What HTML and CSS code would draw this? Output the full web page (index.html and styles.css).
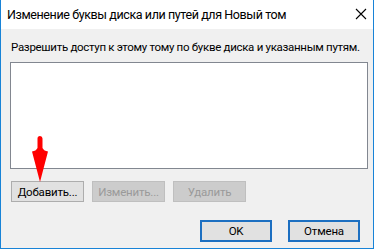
FILE: index.html
```html
<!DOCTYPE html>
<html lang="ru">
<head>
    <meta charset="UTF-8">
    <meta name="viewport" content="width=device-width, initial-scale=1.0">
    <title>Изменение буквы диска или путей для Новый том</title>
    <link rel="stylesheet" href="styles.css">
</head>
<body>

    <div class="window">
        <!-- Title bar -->
        <div class="titlebar">
            <span class="title">Изменение буквы диска или путей для Новый том</span>
            <svg class="close" width="12" height="12" viewBox="0 0 12 12">
                <path d="M1 1 L11 11 M11 1 L1 11" stroke="#000" stroke-width="1.1" fill="none" />
            </svg>
        </div>

        <!-- Dialog body -->
        <div class="content">
            <p class="caption">Разрешить доступ к этому тому по букве диска и указанным путям.</p>
            <div class="list"></div>

            <div class="actions">
                <button class="btn">Добавить...</button>
                <button class="btn" disabled>Изменить...</button>
                <button class="btn" disabled>Удалить</button>
            </div>

            <div class="footer">
                <button class="btn btn-default">OK</button>
                <button class="btn btn-default">Отмена</button>
            </div>
        </div>

        <!-- Red pointer over the "Add" button -->
        <svg class="pointer" width="18" height="46" viewBox="0 0 18 46">
            <path d="M6.5 2.5 A2.5 2.5 0 0 1 11.5 2.5 L11.5 12 Q13 15 17 15.5 L9 46 L1 15.5 Q5 15 6.5 12 Z" fill="#f00" />
        </svg>
    </div>

</body>
</html>
```

FILE: styles.css
```css
body {
    margin: 0;
    font-family: Roboto, "Liberation Sans", Arial, sans-serif;
    font-size: 12px;
    color: #000;
    background-color: #fff;
}

.window {
    position: relative;
    width: 374px;
    height: 249px;
    box-sizing: border-box;
    border: 1px solid #1883d7;
    border-top: none;
    background-color: #f0f0f0;
    overflow: hidden;
}

.titlebar {
    display: flex;
    align-items: center;
    justify-content: space-between;
    height: 29px;
    padding: 0 6px 1px 6px;
    box-sizing: border-box;
    background-color: #fff;
}

.title {
    font-size: 12.5px;
    letter-spacing: -0.4px;
    white-space: nowrap;
}

.close {
    display: block;
}

.content {
    padding: 10px 5px 0 9px;
}

.caption {
    margin: 0 0 7px 1px;
    font-size: 11.5px;
    line-height: 16px;
    letter-spacing: -0.3px;
    white-space: nowrap;
}

.list {
    height: 105px;
    border: 1px solid #828790;
    background-color: #fff;
}

.actions {
    display: flex;
    gap: 8px;
    margin: 12px 0 0 1px;
}

.footer {
    display: flex;
    justify-content: flex-end;
    gap: 16px;
    margin-top: 18px;
    padding-right: 8px;
}

.btn {
    width: 73px;
    height: 21px;
    padding: 0;
    font-family: inherit;
    font-size: 11.5px;
    letter-spacing: -0.2px;
    color: #000;
    background-color: #e1e1e1;
    border: 1px solid #adadad;
}

.btn:disabled {
    color: #9a9a9a;
    background-color: #cccccc;
    border-color: #bfbfbf;
}

.btn-default {
    width: 72px;
    height: 22px;
    border: 2px solid #1c6fc1;
}

.pointer {
    position: absolute;
    left: 30px;
    top: 136px;
}
```
